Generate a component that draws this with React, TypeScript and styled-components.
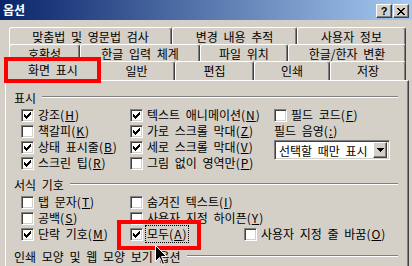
import styled, { createGlobalStyle } from "styled-components";

const GlobalStyle = createGlobalStyle`
  html, body { margin: 0; padding: 0; background: #d4d0c8; }
  body {
    font-family: "Noto Sans CJK KR", "Noto Sans", sans-serif;
    font-size: 12px;
    color: #000;
  }
`;

const Window = styled.div`
  position: relative;
  width: 412px;
  height: 266px;
  overflow: hidden;
  background: #d4d0c8;
`;

const TitleBar = styled.div`
  display: flex;
  align-items: flex-start;
  height: 20px;
  padding: 0 3px;
  background: linear-gradient(to right, #0a246a, #a6caf0);
`;

const Title = styled.span`
  color: #fff;
  font-weight: bold;
  line-height: 20px;
`;

const CaptionButtons = styled.div`
  display: flex;
  gap: 1px;
  margin: 4px 0 0 auto;
`;

const CaptionButton = styled.div`
  width: 16px;
  height: 14px;
  box-sizing: border-box;
  display: flex;
  align-items: center;
  justify-content: center;
  background: #d4d0c8;
  border-top: 1px solid #fff;
  border-left: 1px solid #fff;
  border-right: 1px solid #404040;
  border-bottom: 1px solid #404040;
  box-shadow: inset -1px -1px #808080;
  font: bold 11px "Liberation Sans", sans-serif;
  line-height: 12px;
`;

const TabStrip = styled.div`
  padding-top: 7px;
`;

const TabRow = styled.div<{ $h: number; $left: number }>`
  display: flex;
  height: ${({ $h }) => $h}px;
  padding-left: ${({ $left }) => $left}px;
`;

const Tab = styled.div<{ $w: number; $active?: boolean }>`
  position: relative;
  z-index: ${({ $active }) => ($active ? 2 : 0)};
  flex: none;
  box-sizing: border-box;
  width: ${({ $w, $active }) => ($active ? $w + 4 : $w)}px;
  height: ${({ $active }) => ($active ? 22 : 19)}px;
  margin: ${({ $active }) => ($active ? "-2px -2px 0" : "0")};
  display: flex;
  align-items: center;
  justify-content: center;
  padding-bottom: ${({ $active }) => ($active ? 2 : 1)}px;
  background: #d4d0c8;
  border-top: 1px solid #fff;
  border-left: 1px solid #fff;
  border-right: 1px solid #404040;
  box-shadow: inset -1px 0 #808080;
  border-radius: 3px 3px 0 0;
  word-spacing: 3px;
  white-space: nowrap;
`;

const Panel = styled.div`
  margin-left: 5px;
  width: 404px;
  height: 186px;
  box-sizing: border-box;
  padding: 8px 10px 0 8px;
  border-top: 1px solid #fff;
  border-left: 1px solid #fff;
  border-right: 1px solid #404040;
  box-shadow: inset -1px 0 #808080;
`;

const Section = styled.div<{ $top: number }>`
  margin-top: ${({ $top }) => $top}px;
`;

const Header = styled.div`
  display: flex;
  align-items: center;
  gap: 6px;
  height: 16px;
  word-spacing: 3px;
  white-space: nowrap;
`;

const Rule = styled.div`
  flex: 1;
  border-top: 1px solid #808080;
  border-bottom: 1px solid #fff;
`;

const Grid = styled.div<{ $cols: string; $rows: number }>`
  display: grid;
  grid-template-columns: ${({ $cols }) => $cols};
  grid-template-rows: repeat(${({ $rows }) => $rows}, 16px);
  grid-auto-flow: column;
  margin-top: 2px;
  padding-left: 7px;
`;

const Item = styled.div`
  display: flex;
  align-items: center;
  gap: 4px;
  white-space: nowrap;
  word-spacing: 3px;
`;

const Box = styled.div`
  position: relative;
  flex: none;
  width: 13px;
  height: 13px;
  box-sizing: border-box;
  background: #fff;
  border-top: 1px solid #808080;
  border-left: 1px solid #808080;
  border-right: 1px solid #fff;
  border-bottom: 1px solid #fff;
  box-shadow: inset 1px 1px #404040, inset -1px -1px #d4d0c8;
  svg { position: absolute; left: 2px; top: 2px; }
`;

const Text = styled.span<{ $focus?: boolean }>`
  line-height: 14px;
  outline: ${({ $focus }) => ($focus ? "1px dotted #000" : "none")};
  outline-offset: 1px;
  u { text-underline-offset: 1px; }
`;

const Accel = styled.span`
  letter-spacing: 1px;
  margin-right: -1px;
`;

const Spacer = styled.div``;

const Combo = styled.div`
  align-self: start;
  display: flex;
  align-items: center;
  width: 116px;
  height: 20px;
  margin-top: 1px;
  box-sizing: border-box;
  background: #fff;
  border-top: 1px solid #808080;
  border-left: 1px solid #808080;
  border-right: 1px solid #fff;
  border-bottom: 1px solid #fff;
  box-shadow: inset 1px 1px #404040, inset -1px -1px #d4d0c8;
  padding: 2px 2px 2px 4px;
  word-spacing: 3px;
  white-space: nowrap;
`;

const ComboValue = styled.span`
  flex: 1;
`;

const ComboButton = styled.div`
  width: 14px;
  height: 16px;
  box-sizing: border-box;
  display: flex;
  align-items: center;
  justify-content: center;
  background: #d4d0c8;
  border-top: 1px solid #fff;
  border-left: 1px solid #fff;
  border-right: 1px solid #404040;
  border-bottom: 1px solid #404040;
  box-shadow: inset -1px -1px #808080;
`;

const Highlight = styled.div<{ $x: number; $y: number; $w: number; $h: number }>`
  position: absolute;
  left: ${({ $x }) => $x}px;
  top: ${({ $y }) => $y}px;
  width: ${({ $w }) => $w}px;
  height: ${({ $h }) => $h}px;
  box-sizing: border-box;
  border: 4px solid #ff0000;
  z-index: 5;
`;

const Cursor = styled.svg`
  position: absolute;
  left: 154px;
  top: 244px;
  z-index: 6;
`;

const Check = () => (
  <svg width="7" height="7" viewBox="0 0 7 7" shapeRendering="crispEdges">
    <g fill="#000">
      <rect x="6" y="0" width="1" height="1" />
      <rect x="5" y="1" width="2" height="1" />
      <rect x="0" y="2" width="1" height="1" />
      <rect x="4" y="2" width="3" height="1" />
      <rect x="0" y="3" width="2" height="1" />
      <rect x="3" y="3" width="3" height="1" />
      <rect x="0" y="4" width="5" height="1" />
      <rect x="1" y="5" width="3" height="1" />
      <rect x="2" y="6" width="1" height="1" />
    </g>
  </svg>
);

const CheckItem = ({
  label,
  k,
  checked,
  focus,
}: {
  label: string;
  k: string;
  checked?: boolean;
  focus?: boolean;
}) => (
  <Item>
    <Box>{checked && <Check />}</Box>
    <Text $focus={focus}>
      {label}
      <Accel>
        (<u>{k}</u>)
      </Accel>
    </Text>
  </Item>
);

export default function App() {
  return (
    <Window>
      <GlobalStyle />
      <TitleBar>
        <Title>옵션</Title>
        <CaptionButtons>
          <CaptionButton>?</CaptionButton>
          <CaptionButton>
            <svg width="8" height="7" viewBox="0 0 8 7" shapeRendering="crispEdges">
              <path d="M0 0h2l2 2.5 2-2.5h2l-3 3.5 3 3.5h-2l-2-2.5-2 2.5h-2l3-3.5z" fill="#000" />
            </svg>
          </CaptionButton>
        </CaptionButtons>
      </TitleBar>

      <TabStrip>
        <TabRow $h={17} $left={9}>
          <Tab $w={163}>맞춤법 및 영문법 검사</Tab>
          <Tab $w={125}>변경 내용 추적</Tab>
          <Tab $w={109}>사용자 정보</Tab>
        </TabRow>
        <TabRow $h={17} $left={9}>
          <Tab $w={71}>호환성</Tab>
          <Tab $w={120}>한글 입력 체계</Tab>
          <Tab $w={88}>파일 위치</Tab>
          <Tab $w={118}>한글/한자 변환</Tab>
        </TabRow>
        <TabRow $h={19} $left={8}>
          <Tab $w={90} $active>화면 표시</Tab>
          <Tab $w={77}>일반</Tab>
          <Tab $w={79}>편집</Tab>
          <Tab $w={76}>인쇄</Tab>
          <Tab $w={76}>저장</Tab>
        </TabRow>
      </TabStrip>

      <Panel>
        <Section $top={0}>
          <Header>
            <span>표시</span>
            <Rule />
          </Header>
          <Grid $cols="109px 144px auto" $rows={4}>
            <CheckItem label="강조" k="H" checked />
            <CheckItem label="책갈피" k="K" />
            <CheckItem label="상태 표시줄" k="B" checked />
            <CheckItem label="스크린 팁" k="R" checked />
            <CheckItem label="텍스트 애니메이션" k="N" checked />
            <CheckItem label="가로 스크롤 막대" k="Z" checked />
            <CheckItem label="세로 스크롤 막대" k="V" checked />
            <CheckItem label="그림 없이 영역만" k="P" />
            <CheckItem label="필드 코드" k="F" />
            <Item>
              <Text>
                필드 음영
                <Accel>
                  (<u>:</u>)
                </Accel>
              </Text>
            </Item>
            <Combo>
              <ComboValue>선택할 때만 표시</ComboValue>
              <ComboButton>
                <svg width="7" height="4" viewBox="0 0 7 4" shapeRendering="crispEdges">
                  <path d="M0 0h7l-3.5 4z" fill="#000" />
                </svg>
              </ComboButton>
            </Combo>
          </Grid>
        </Section>

        <Section $top={5}>
          <Header>
            <span>서식 기호</span>
            <Rule />
          </Header>
          <Grid $cols="109px 114px auto" $rows={3}>
            <CheckItem label="탭 문자" k="T" />
            <CheckItem label="공백" k="S" />
            <CheckItem label="단락 기호" k="M" checked />
            <CheckItem label="숨겨진 텍스트" k="I" />
            <CheckItem label="사용자 지정 하이픈" k="Y" />
            <CheckItem label="모두" k="A" checked focus />
            <Spacer />
            <Spacer />
            <CheckItem label="사용자 지정 줄 바꿈" k="O" />
          </Grid>
        </Section>

        <Section $top={6}>
          <Header>
            <span>인쇄 모양 및 웹 모양 보기 옵션</span>
            <Rule />
          </Header>
        </Section>
      </Panel>

      <Highlight $x={4} $y={57} $w={97} $h={26} />
      <Highlight $x={117} $y={220} $w={84} $h={30} />

      <Cursor width="14" height="22" viewBox="0 0 14 22">
        <path
          d="M1.5 1.5 L1.5 17.5 L5.5 13.5 L8.5 20.5 L10.5 19.5 L7.5 12.5 L12.5 12.5 Z"
          fill="#000"
          stroke="#fff"
          strokeWidth="1"
        />
      </Cursor>
    </Window>
  );
}
